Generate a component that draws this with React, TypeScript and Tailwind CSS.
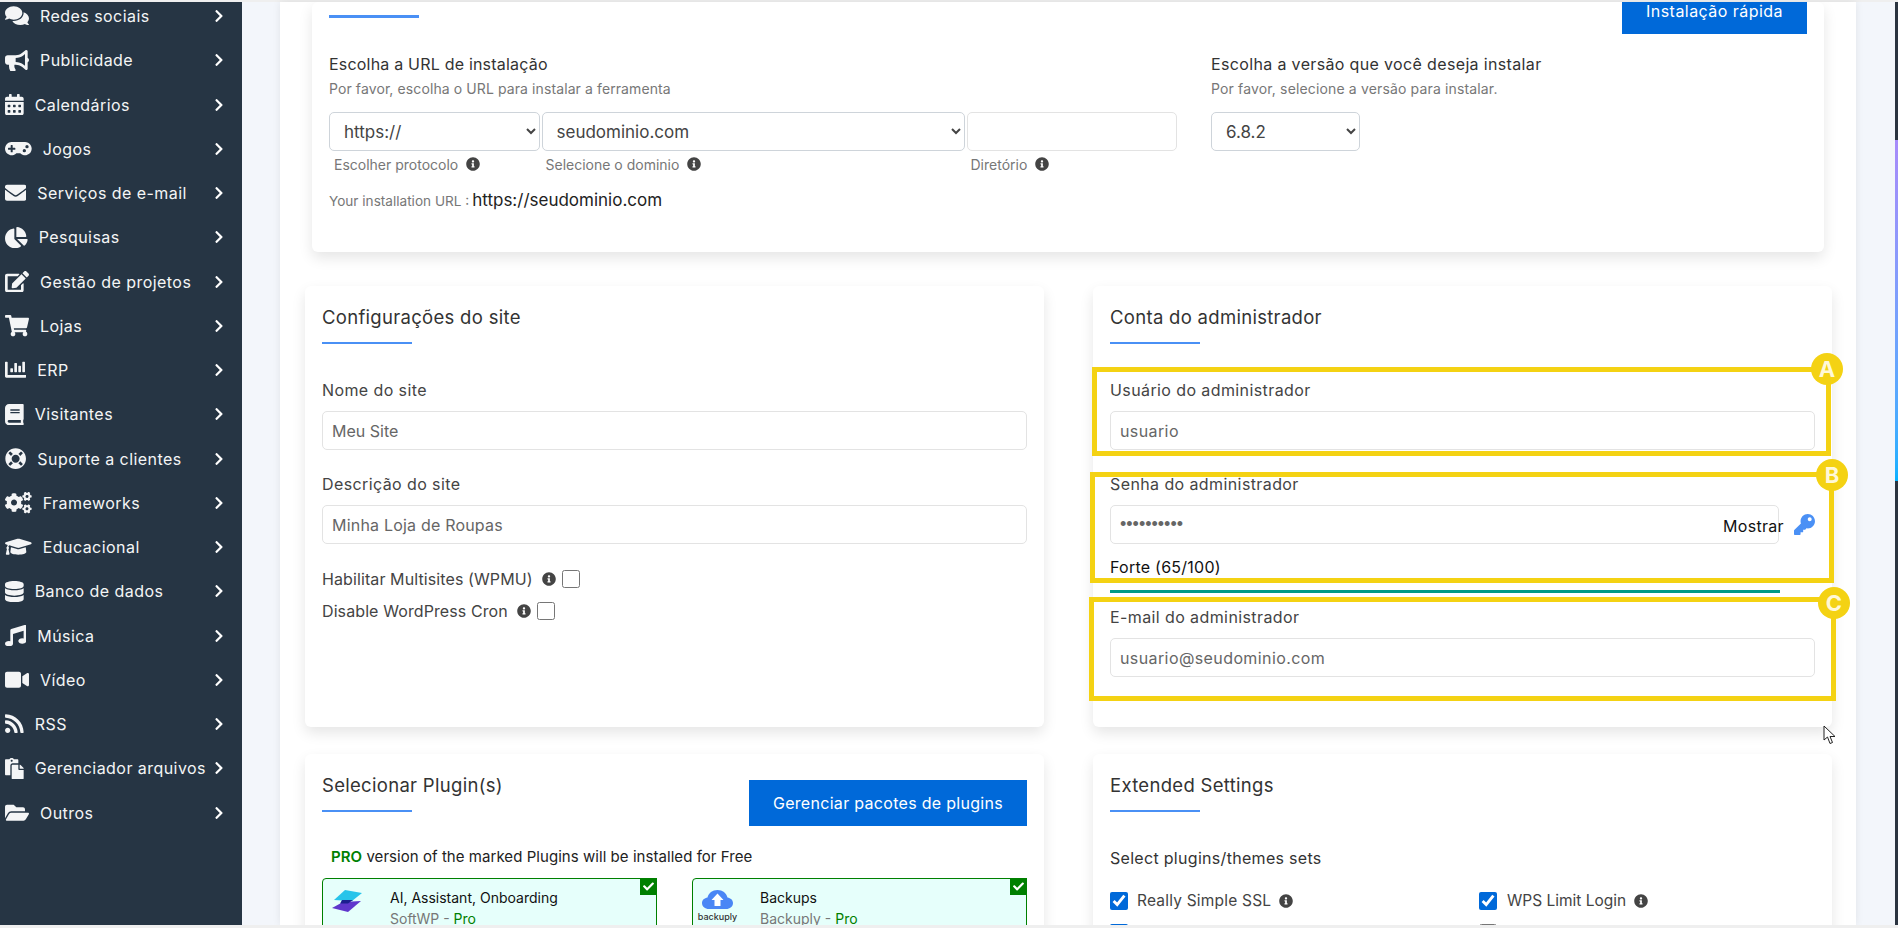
import type React from "react";
import {
  FaBook,
  FaBullhorn,
  FaCalendarAlt,
  FaChartBar,
  FaChartPie,
  FaCheck,
  FaChevronRight,
  FaCogs,
  FaComments,
  FaDatabase,
  FaEdit,
  FaEnvelope,
  FaFolderOpen,
  FaGamepad,
  FaGraduationCap,
  FaInfoCircle,
  FaKey,
  FaLifeRing,
  FaMusic,
  FaPaste,
  FaRss,
  FaShoppingCart,
  FaVideo
} from "react-icons/fa";

// icon widths follow the font-awesome glyph ratios, the label position depends on them
const menuItems = [
  { label: "Redes sociais", icon: FaComments, width: "w-[24px]" },
  { label: "Publicidade", icon: FaBullhorn, width: "w-[24px]" },
  { label: "Calendários", icon: FaCalendarAlt, width: "w-[18.7px]" },
  { label: "Jogos", icon: FaGamepad, width: "w-[26.7px]" },
  { label: "Serviços de e-mail", icon: FaEnvelope, width: "w-[21.3px]" },
  { label: "Pesquisas", icon: FaChartPie, width: "w-[22.7px]" },
  { label: "Gestão de projetos", icon: FaEdit, width: "w-[24px]" },
  { label: "Lojas", icon: FaShoppingCart, width: "w-[24px]" },
  { label: "ERP", icon: FaChartBar, width: "w-[21.3px]" },
  { label: "Visitantes", icon: FaBook, width: "w-[18.7px]" },
  { label: "Suporte a clientes", icon: FaLifeRing, width: "w-[21.3px]" },
  { label: "Frameworks", icon: FaCogs, width: "w-[26.7px]" },
  { label: "Educacional", icon: FaGraduationCap, width: "w-[26.7px]" },
  { label: "Banco de dados", icon: FaDatabase, width: "w-[18.7px]" },
  { label: "Música", icon: FaMusic, width: "w-[21.3px]" },
  { label: "Vídeo", icon: FaVideo, width: "w-[24px]" },
  { label: "RSS", icon: FaRss, width: "w-[18.7px]" },
  { label: "Gerenciador arquivos", icon: FaPaste, width: "w-[18.7px]" },
  { label: "Outros", icon: FaFolderOpen, width: "w-[24px]" }
];

function Sidebar(): React.JSX.Element {
  return (
    <aside className="w-[242px] shrink-0 overflow-hidden bg-[#263544]">
      <div className="-mt-[8px] flex flex-col">
        {menuItems.map((item) => (
          <div className="flex h-[44.25px] shrink-0 items-center pl-[5px] pr-[16px] text-[16px] tracking-[0.45px] text-[#f4f5f6]" key={item.label}>
            <item.icon className={`h-[21.3px] shrink-0 ${item.width}`} />
            <span className="ml-[11px] whitespace-nowrap">{item.label}</span>
            <FaChevronRight className="ml-auto shrink-0 text-[14px] text-white" />
          </div>
        ))}
      </div>
    </aside>
  );
}

function Info({ className = "" }: { className?: string }): React.JSX.Element {
  return <FaInfoCircle className={`shrink-0 text-[14px] text-[#444444] ${className}`} />;
}

function Heading({ children }: { children: React.ReactNode }): React.JSX.Element {
  return (
    <div>
      <h2 className="h-[24px] whitespace-nowrap text-[18.5px] leading-[25px] tracking-[0.3px] text-[#333333]">{children}</h2>
      <div className="mt-[12.5px] h-[2.5px] w-[90px] bg-[#4a90f5]" />
    </div>
  );
}

function Field({
  label,
  value,
  className = "",
  inputClass = "tracking-[0.4px]"
}: {
  label: string;
  value: string;
  className?: string;
  inputClass?: string;
}): React.JSX.Element {
  return (
    <div className={className}>
      <label className="block h-[24px] text-[16px] leading-[26px] tracking-[0.4px] text-[#444444]">{label}</label>
      <input
        className={`mt-[10px] block h-[39px] w-full rounded-[5px] border border-[#e3e3e3] px-[9px] text-[16px] text-[#666666] outline-none ${inputClass}`}
        defaultValue={value}
        type="text"
      />
    </div>
  );
}

function UrlColumn({
  children,
  hint,
  widthClass,
  hintClass
}: {
  children: React.ReactNode;
  hint: string;
  widthClass: string;
  hintClass: string;
}): React.JSX.Element {
  return (
    <div className={widthClass}>
      {children}
      <div className={`mt-[3px] flex h-[20px] items-center text-[14px] text-[#777777] ${hintClass}`}>
        <span>{hint}</span>
        <Info className="ml-[8px]" />
      </div>
    </div>
  );
}

function CheckRow({ label, marginClass }: { label: string; marginClass: string }): React.JSX.Element {
  return (
    <div className={`flex h-[24px] items-center text-[16px] tracking-[0.1px] text-[#444444] ${marginClass}`}>
      <span className="whitespace-nowrap">{label}</span>
      <Info className="ml-[9px]" />
      <input className="ml-[6px] size-[18px] accent-[#0069d9]" type="checkbox" />
    </div>
  );
}

function PluginCard({
  logo,
  title,
  vendor
}: {
  logo: React.ReactNode;
  title: string;
  vendor: string;
}): React.JSX.Element {
  return (
    <div className="relative flex h-[120px] rounded-[4px] border border-[#008000] bg-[#e6fffb]">
      <div className="w-[67px] shrink-0 pl-[8px] pt-[11px]">{logo}</div>
      <div className="pt-[8px]">
        <p className="h-[22px] text-[14px] leading-[22px] text-[#111111]">{title}</p>
        <p className="h-[20px] text-[14px] leading-[20px] text-[#777777]">
          {vendor} - <span className="text-[#008000]">Pro</span>
        </p>
      </div>
      <div className="absolute -right-px -top-px flex size-[17px] items-center justify-center bg-[#008000]">
        <FaCheck className="text-[11px] text-white" />
      </div>
    </div>
  );
}

function SoftWpLogo(): React.JSX.Element {
  return (
    <svg className="h-[24px] w-[32px]" viewBox="0 0 32 24">
      <path d="M12 12 L30 11 L17 22 L1 18 Z" fill="#5f36cc" />
      <path d="M14 0 L31 3 L21 11 L3 10 Z" fill="#27c4ea" />
      <path d="M11 10 L22 10 L17 13.5 L9 13.5 Z" fill="#1c1f8f" />
    </svg>
  );
}

function BackuplyLogo(): React.JSX.Element {
  return (
    <div className="flex w-[33px] flex-col items-center">
      <svg className="h-[19px] w-[31px]" viewBox="0 0 31 19">
        <path
          d="M7 19 C3 19 0 16.5 0 13 C0 10 2.5 8 5.5 7.5 C6.5 3 10.5 0 15.5 0 C20.5 0 24.5 3 25.5 7.5 C28.5 8 31 10 31 13 C31 16.5 28 19 24 19 Z"
          fill="#4a86f5"
        />
        <path d="M15.5 3.5 L21.5 10 L18.5 10 L18.5 16 L12.5 16 L12.5 10 L9.5 10 Z" fill="#ffffff" />
      </svg>
      <span className="mt-[3px] whitespace-nowrap text-[9px] font-medium leading-[10px] text-[#333333]">backuply</span>
    </div>
  );
}

function Marker({
  letter,
  frameClass,
  badgeClass
}: {
  letter: string;
  frameClass: string;
  badgeClass: string;
}): React.JSX.Element {
  return (
    <>
      <div className={`pointer-events-none absolute border-[5px] border-[#f4d213] ${frameClass}`} />
      <div className={`absolute flex size-[32px] items-center justify-center rounded-full bg-[#f4d213] text-[22px] font-bold text-[#fff8d8] ${badgeClass}`}>
        {letter}
      </div>
    </>
  );
}

export default function App(): React.JSX.Element {
  return (
    <div className="relative flex h-[928px] w-[1898px] flex-col overflow-hidden bg-[#f3f6fb] font-[Inter,sans-serif]">
      <div className="h-[2px] shrink-0 bg-[#efefef]" />
      <div className="flex min-h-0 flex-1">
        <Sidebar />
        <main className="min-w-0 flex-1 pl-[38px] pr-[39px]">
          <div className="h-full overflow-hidden bg-white shadow-[0_0_8px_rgba(0,0,0,0.08)]">
            <section className="ml-[32px] h-[250px] w-[1512px] rounded-[6px] px-[17px] shadow-[0_6px_14px_rgba(0,0,0,0.1)]">
              <div className="flex h-[30px] items-start justify-between">
                <div className="mt-[13px] h-[2.5px] w-[90px] bg-[#4a90f5]" />
                <button className="-mt-[14px] flex h-[46px] w-[185px] items-center justify-center bg-[#0069d9] text-[16px] tracking-[0.45px] text-white" type="button">
                  Instalação rápida
                </button>
              </div>
              <div className="flex">
                <div className="w-[882px]">
                  <p className="mt-[19px] h-[24px] text-[16px] leading-[26px] tracking-[0.2px] text-[#333333]">Escolha a URL de instalação</p>
                  <p className="mt-[4px] h-[20px] text-[14px] leading-[20px] tracking-[0.1px] text-[#777777]">Por favor, escolha o URL para instalar a ferramenta</p>
                  <div className="mt-[13px] flex gap-[2px]">
                    <UrlColumn hint="Escolher protocolo" hintClass="pl-[5px]" widthClass="w-[210.5px]">
                      <select className="h-[39px] w-full rounded-[5px] border border-[#ced4da] bg-white pl-[10px] text-[17px] text-[#444444]" defaultValue="https://">
                        <option>https://</option>
                      </select>
                    </UrlColumn>
                    <UrlColumn hint="Selecione o dominio" hintClass="pl-[4px]" widthClass="w-[423px]">
                      <select className="h-[39px] w-full rounded-[5px] border border-[#ced4da] bg-white pl-[10px] text-[17px] text-[#444444]" defaultValue="seudominio.com">
                        <option>seudominio.com</option>
                      </select>
                    </UrlColumn>
                    <UrlColumn hint="Diretório" hintClass="pl-[4px]" widthClass="w-[210px]">
                      <input className="h-[39px] w-full rounded-[5px] border border-[#e3e3e3] outline-none" type="text" />
                    </UrlColumn>
                  </div>
                  <p className="mt-[15px] flex h-[24px] items-center text-[13.6px] text-[#777777]">
                    Your installation URL :<span className="ml-[3px] text-[17px] text-[#222222]">https://seudominio.com</span>
                  </p>
                </div>
                <div>
                  <p className="mt-[19px] h-[24px] text-[16px] leading-[26px] tracking-[0.35px] text-[#333333]">Escolha a versão que você deseja instalar</p>
                  <p className="mt-[4px] h-[20px] text-[14px] leading-[20px] tracking-[0.15px] text-[#777777]">Por favor, selecione a versão para instalar.</p>
                  <select className="mt-[13px] h-[39px] w-[149px] rounded-[5px] border border-[#ced4da] bg-white pl-[10px] text-[17px] text-[#444444]" defaultValue="6.8.2">
                    <option>6.8.2</option>
                  </select>
                </div>
              </div>
            </section>

            <div className="ml-[25px] mt-[34px] grid grid-cols-[739px_739px] gap-x-[49px] gap-y-[27px]">
              <section className="h-[441px] rounded-[6px] px-[17px] pt-[19px] shadow-[0_6px_14px_rgba(0,0,0,0.1)]">
                <Heading>Configurações do site</Heading>
                <Field className="mt-[33px]" inputClass="tracking-normal" label="Nome do site" value="Meu Site" />
                <Field className="mt-[21px]" inputClass="tracking-[0.2px]" label="Descrição do site" value="Minha Loja de Roupas" />
                <CheckRow label="Habilitar Multisites (WPMU)" marginClass="mt-[23px]" />
                <CheckRow label="Disable WordPress Cron" marginClass="mt-[8px]" />
              </section>

              <section className="relative h-[441px] rounded-[6px] px-[17px] pt-[19px] shadow-[0_6px_14px_rgba(0,0,0,0.1)]">
                <Heading>Conta do administrador</Heading>
                <Field className="mt-[33px]" label="Usuário do administrador" value="usuario" />
                <div className="mt-[21px]">
                  <label className="block h-[24px] text-[16px] leading-[26px] tracking-[0.4px] text-[#444444]">Senha do administrador</label>
                  <div className="relative mt-[10px] flex items-center">
                    <input
                      className="block h-[39px] w-[670px] rounded-[5px] border border-[#e3e3e3] px-[9px] font-['Liberation_Sans',sans-serif] text-[18px] text-[#666666] outline-none"
                      defaultValue="usuario123"
                      type="password"
                    />
                    <span className="absolute left-[613px] top-[9px] text-[16px] tracking-[0.3px] text-[#111111]">Mostrar</span>
                    <FaKey className="ml-[15px] text-[21px] text-[#4a90f5]" />
                  </div>
                </div>
                <p className="mt-[10px] h-[24px] text-[16px] leading-[27px] tracking-[0.25px] text-[#111111]">Forte (65/100)</p>
                <div className="mt-[12px] h-[3px] w-[670px] bg-[#009a86]" />
                <Field className="mt-[11px]" label="E-mail do administrador" value="usuario@seudominio.com" />

                <Marker badgeClass="left-[718px] top-[67px]" frameClass="-left-px top-[81px] h-[89px] w-[739px]" letter="A" />
                <Marker badgeClass="left-[723px] top-[173px]" frameClass="-left-[3px] top-[186px] h-[111px] w-[744px]" letter="B" />
                <Marker badgeClass="left-[725px] top-[301px]" frameClass="-left-[4px] top-[311px] h-[104px] w-[747px]" letter="C" />
              </section>

              <section className="h-[300px] rounded-[6px] px-[17px] pt-[19px] shadow-[0_6px_14px_rgba(0,0,0,0.1)]">
                <div className="flex items-start justify-between">
                  <Heading>Selecionar Plugin(s)</Heading>
                  <button className="mt-[7px] flex h-[46px] w-[278px] items-center justify-center bg-[#0069d9] text-[16px] tracking-[0.3px] text-white" type="button">
                    Gerenciar pacotes de plugins
                  </button>
                </div>
                <p className="mt-[21px] h-[20px] pl-[9px] text-[15px] leading-[20px] tracking-[0.05px] text-[#222222]">
                  <span className="font-semibold text-[#008000]">PRO</span> version of the marked Plugins will be installed for Free
                </p>
                <div className="mt-[11px] grid grid-cols-2 gap-x-[35px]">
                  <PluginCard logo={<SoftWpLogo />} title="AI, Assistant, Onboarding" vendor="SoftWP" />
                  <PluginCard logo={<BackuplyLogo />} title="Backups" vendor="Backuply" />
                </div>
              </section>

              <section className="h-[300px] rounded-[6px] px-[17px] pt-[19px] shadow-[0_6px_14px_rgba(0,0,0,0.1)]">
                <Heading>Extended Settings</Heading>
                <p className="mt-[36px] h-[20px] whitespace-nowrap text-[16px] leading-[20px] tracking-[0.3px] text-[#333333]">Select plugins/themes sets</p>
                <div className="mt-[24px] grid grid-cols-[369px_1fr] gap-y-[14px]">
                  <div className="flex h-[18px] items-center text-[15.5px] tracking-[0.2px] text-[#444444]">
                    <input className="size-[18px] accent-[#0069d9]" defaultChecked type="checkbox" />
                    <span className="ml-[9px]">Really Simple SSL</span>
                    <Info className="ml-[8px]" />
                  </div>
                  <div className="flex h-[18px] items-center text-[15.5px] text-[#444444]">
                    <input className="size-[18px] accent-[#0069d9]" defaultChecked type="checkbox" />
                    <span className="ml-[10px]">WPS Limit Login</span>
                    <Info className="ml-[8px]" />
                  </div>
                  <div className="h-[18px]">
                    <input className="size-[18px] accent-[#0069d9]" defaultChecked type="checkbox" />
                  </div>
                  <div className="h-[18px]">
                    <input className="size-[18px] accent-[#0069d9]" type="checkbox" />
                  </div>
                </div>
              </section>
            </div>
          </div>
        </main>
        <div className="flex w-[3px] shrink-0 flex-col bg-[#2b3440]">
          <div className="mt-[138px] h-[341px] bg-gradient-to-b from-[#a78bfa] to-[#00b0ff]" />
        </div>
      </div>
      <div className="h-[3px] shrink-0 bg-[#efefef]" />

      <svg className="absolute left-[1823px] top-[725px] h-[20px] w-[13px]" viewBox="0 0 13 20">
        <path d="M1 1 L1 15 L4.5 12 L7 18.5 L9.5 17.5 L7 11.5 L12 11.5 Z" fill="#ffffff" stroke="#222222" strokeWidth="1" />
      </svg>
    </div>
  );
}
